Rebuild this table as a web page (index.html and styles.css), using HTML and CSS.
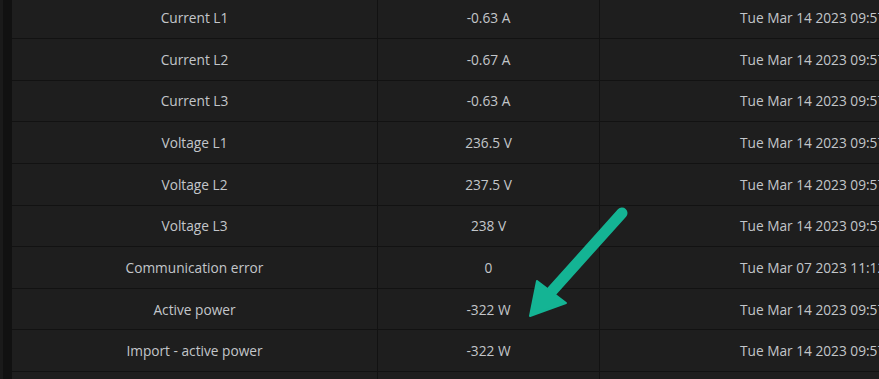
FILE: index.html
```html
<!DOCTYPE html>
<html>
<head>
<meta charset="utf-8">
<link rel="stylesheet" href="styles.css">
</head>
<body>
<div class="page">
  <div class="rail"></div>
  <div class="table-wrap">
    <div class="table">
      <div class="row"><div class="c1">Current L1</div><div class="c2">-0.63 A</div><div class="c3">Tue Mar 14 2023 09:57:32</div></div>
      <div class="row"><div class="c1">Current L2</div><div class="c2">-0.67 A</div><div class="c3">Tue Mar 14 2023 09:57:32</div></div>
      <div class="row"><div class="c1">Current L3</div><div class="c2">-0.63 A</div><div class="c3">Tue Mar 14 2023 09:57:32</div></div>
      <div class="row"><div class="c1">Voltage L1</div><div class="c2">236.5 V</div><div class="c3">Tue Mar 14 2023 09:57:32</div></div>
      <div class="row"><div class="c1">Voltage L2</div><div class="c2">237.5 V</div><div class="c3">Tue Mar 14 2023 09:57:32</div></div>
      <div class="row"><div class="c1">Voltage L3</div><div class="c2">238 V</div><div class="c3">Tue Mar 14 2023 09:57:32</div></div>
      <div class="row"><div class="c1">Communication error</div><div class="c2">0</div><div class="c3">Tue Mar 07 2023 11:12:05</div></div>
      <div class="row"><div class="c1">Active power</div><div class="c2">-322 W</div><div class="c3">Tue Mar 14 2023 09:57:32</div></div>
      <div class="row"><div class="c1">Import - active power</div><div class="c2">-322 W</div><div class="c3">Tue Mar 14 2023 09:57:32</div></div>
      <div class="row"><div class="c1"></div><div class="c2"></div><div class="c3"></div></div>
    </div>
    <svg class="arrow" width="879" height="379" viewBox="0 0 879 379">
      <line x1="622" y1="213" x2="552" y2="291" stroke="#14b494" stroke-width="11" stroke-linecap="round"/>
      <polygon points="530,316 537,281 566,303" fill="#14b494" stroke="#14b494" stroke-width="2" stroke-linejoin="round"/>
    </svg>
  </div>
</div>
</body>
</html>
```
FILE: styles.css
```css
html, body {
  margin: 0;
  padding: 0;
  background: #111111;
  overflow: hidden;
}
.page {
  display: flex;
  width: 879px;
  height: 379px;
  overflow: hidden;
}
.rail {
  width: 3px;
  flex: none;
  background: #1a1a1a;
  margin-right: 9px;
}
.table-wrap {
  flex: 1;
  overflow: hidden;
}
.table {
  margin-top: -2.6px;
  width: 1100px;
  background: #1e1e1e;
  font-family: "Open Sans", "DejaVu Sans", sans-serif;
  font-size: 13.7px;
  color: #c3c6ca;
}
.row {
  display: flex;
  height: 41.625px;
  box-sizing: border-box;
  border-bottom: 1px solid #121212;
}
.row > div {
  display: flex;
  align-items: center;
  box-sizing: border-box;
  white-space: nowrap;
}
.c1 {
  width: 366px;
  justify-content: center;
  border-right: 1px solid #121212;
}
.c2 {
  width: 222px;
  justify-content: center;
  border-right: 1px solid #121212;
}
.c3 {
  flex: 1;
  padding-left: 140px;
}
.arrow {
  position: absolute;
  left: 0;
  top: 0;
}
```
